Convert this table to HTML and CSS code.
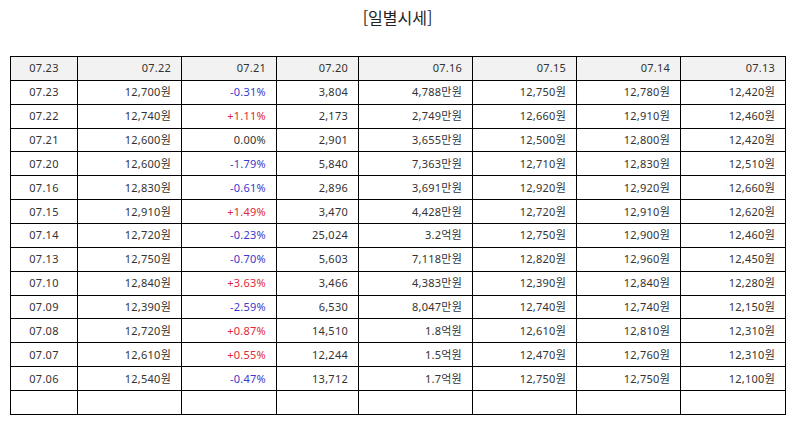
FILE: index.html
```html
<!DOCTYPE html>
<html lang="ko">
<head>
<meta charset="utf-8">
<title>일별시세</title>
<link rel="stylesheet" href="styles.css">
</head>
<body>
<div class="page">
  <h1 class="title">[일별시세]</h1>
  <table class="quotes">
    <colgroup>
      <col class="c1"><col class="c2"><col class="c3"><col class="c4"><col class="c5"><col class="c6"><col class="c7"><col class="c8">
    </colgroup>
    <thead>
      <tr><th class="date">07.23</th><th>07.22</th><th>07.21</th><th>07.20</th><th>07.16</th><th>07.15</th><th>07.14</th><th>07.13</th></tr>
    </thead>
    <tbody>
      <tr><td class="date">07.23</td><td>12,700원</td><td class="down">-0.31%</td><td>3,804</td><td>4,788만원</td><td>12,750원</td><td>12,780원</td><td>12,420원</td></tr>
      <tr><td class="date">07.22</td><td>12,740원</td><td class="up">+1.11%</td><td>2,173</td><td>2,749만원</td><td>12,660원</td><td>12,910원</td><td>12,460원</td></tr>
      <tr><td class="date">07.21</td><td>12,600원</td><td>0.00%</td><td>2,901</td><td>3,655만원</td><td>12,500원</td><td>12,800원</td><td>12,420원</td></tr>
      <tr><td class="date">07.20</td><td>12,600원</td><td class="down">-1.79%</td><td>5,840</td><td>7,363만원</td><td>12,710원</td><td>12,830원</td><td>12,510원</td></tr>
      <tr><td class="date">07.16</td><td>12,830원</td><td class="down">-0.61%</td><td>2,896</td><td>3,691만원</td><td>12,920원</td><td>12,920원</td><td>12,660원</td></tr>
      <tr><td class="date">07.15</td><td>12,910원</td><td class="up">+1.49%</td><td>3,470</td><td>4,428만원</td><td>12,720원</td><td>12,910원</td><td>12,620원</td></tr>
      <tr><td class="date">07.14</td><td>12,720원</td><td class="down">-0.23%</td><td>25,024</td><td>3.2억원</td><td>12,750원</td><td>12,900원</td><td>12,460원</td></tr>
      <tr><td class="date">07.13</td><td>12,750원</td><td class="down">-0.70%</td><td>5,603</td><td>7,118만원</td><td>12,820원</td><td>12,960원</td><td>12,450원</td></tr>
      <tr><td class="date">07.10</td><td>12,840원</td><td class="up">+3.63%</td><td>3,466</td><td>4,383만원</td><td>12,390원</td><td>12,840원</td><td>12,280원</td></tr>
      <tr><td class="date">07.09</td><td>12,390원</td><td class="down">-2.59%</td><td>6,530</td><td>8,047만원</td><td>12,740원</td><td>12,740원</td><td>12,150원</td></tr>
      <tr><td class="date">07.08</td><td>12,720원</td><td class="up">+0.87%</td><td>14,510</td><td>1.8억원</td><td>12,610원</td><td>12,810원</td><td>12,310원</td></tr>
      <tr><td class="date">07.07</td><td>12,610원</td><td class="up">+0.55%</td><td>12,244</td><td>1.5억원</td><td>12,470원</td><td>12,760원</td><td>12,310원</td></tr>
      <tr><td class="date">07.06</td><td>12,540원</td><td class="down">-0.47%</td><td>13,712</td><td>1.7억원</td><td>12,750원</td><td>12,750원</td><td>12,100원</td></tr>
      <tr class="empty"><td></td><td></td><td></td><td></td><td></td><td></td><td></td><td></td></tr>
    </tbody>
  </table>
</div>
</body>
</html>
```

FILE: styles.css
```css
html, body {
  margin: 0;
  padding: 0;
  background: #ffffff;
}

.page {
  padding: 6px 0 0 10px;
  font-family: "Noto Sans", "Noto Sans CJK KR", sans-serif;
  color: #222;
}

.title {
  margin: 0 0 28px 0;
  width: 775px;
  text-align: center;
  font-family: "Noto Sans CJK KR", "Noto Sans", sans-serif;
  font-size: 16px;
  font-weight: 400;
  line-height: 22px;
  color: #222;
}

.quotes {
  width: 775px;
  table-layout: fixed;
  border-collapse: collapse;
  font-size: 11px;
  color: #333;
}

.c1 { width: 67px; }
.c2 { width: 104px; }
.c3 { width: 95px; }
.c4 { width: 82px; }
.c5 { width: 114px; }
.c6 { width: 104px; }
.c7 { width: 104px; }
.c8 { width: 105px; }

.quotes th,
.quotes td {
  border: 1px solid #000;
  height: 22.87px;
  padding: 0 10px 0 4px;
  text-align: right;
  font-weight: 400;
  line-height: 14px;
  letter-spacing: 0.25px;
  white-space: nowrap;
  font-family: "Noto Sans", "Noto Sans CJK KR", sans-serif;
}

.quotes th {
  background: #f2f2f2;
}

.quotes .date {
  text-align: center;
  padding: 0;
}

.quotes .up {
  color: #e0283a;
}

.quotes .down {
  color: #3a3acc;
}
```
